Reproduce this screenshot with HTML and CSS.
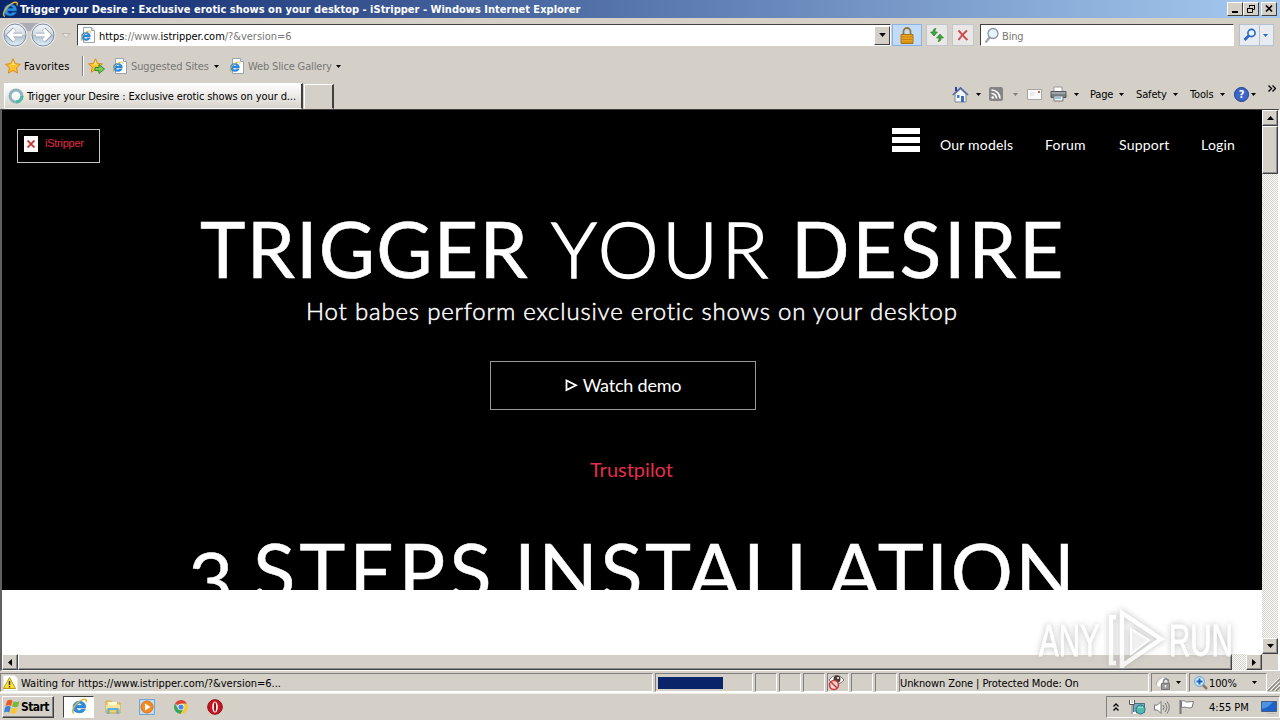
FILE: index.html
```
<!DOCTYPE html>
<html lang="en">
<head>
    <meta charset="UTF-8">
    <meta name="viewport" content="width=device-width, initial-scale=1.0">
    <title>Trigger your Desire - Windows Internet Explorer</title>
    <link rel="stylesheet" href="styles.css">
</head>
<body>
    <svg class="defs" width="0" height="0">
        <symbol id="ie" viewBox="0 0 16 16">
            <path d="M13.8 9.300H5.300c.3 3 3.500 3 4.500 1.200h3.700C11.800 15.600 2 15.300 2 8.400 2 1.200 14.600 1 13.800 9.300zM5.400 6.800h4.900c-.3-2.500-4.500-2.500-4.900 0z" fill="#2b8fe0" stroke="#1763b5" stroke-width=".5" fill-rule="evenodd"/>
            <path d="M2.600 14.600C-1 13 4 5 9.500 2.200 13 .4 15.500 1 14 4.300" fill="none" stroke="#e8b830" stroke-width="1.300"/>
            <path d="M3 13.600C1.500 11 6 5 10 2.600" fill="none" stroke="#3f9be8" stroke-width=".8"/>
        </symbol>
        <symbol id="iepage" viewBox="0 0 16 16">
            <path d="M3.500.5h8l3 3v12h-11z" fill="#fff" stroke="#9aa4b0"/>
            <path d="M11.500.5v3h3" fill="#dde5ee" stroke="#9aa4b0"/>
            <use href="#ie" x="0" y="3" width="12" height="12"/>
        </symbol>
        <symbol id="star" viewBox="0 0 16 16">
            <path d="M8 .8l2.200 4.900 5.200.6-3.900 3.500 1.100 5.300L8 12.400l-4.600 2.700 1.100-5.300L.6 6.300l5.200-.6z" fill="#ffc22e" stroke="#d68a17"/>
            <path d="M8 3l1.300 3.500 3 .5H4l2.700-.5z" fill="#ffe88a"/>
        </symbol>
        <symbol id="down" viewBox="0 0 5 3"><path d="M0 0h5L2.500 3z"/></symbol>
    </svg>

    <div class="titlebar">
        <svg class="title-icon"><use href="#ie"/></svg>
        <span class="title">Trigger your Desire : Exclusive erotic shows on your desktop - iStripper - Windows Internet Explorer</span>
        <div class="winbuttons">
            <span class="winbtn"><svg width="12" height="10"><path d="M3 8h6" stroke="#000" stroke-width="2"/></svg></span>
            <span class="winbtn"><svg width="12" height="10"><path d="M4.500 3.500V1.500h5v4h-2M4 1.500h6M2.500 4.500h5v4h-5zM2 4.500h6" fill="none" stroke="#000"/></svg></span>
            <span class="winbtn close"><svg width="12" height="10"><path d="M3 1.500l6 6M9 1.500l-6 6" stroke="#000" stroke-width="1.600"/></svg></span>
        </div>
    </div>

    <div class="navbar">
        <svg class="backfwd" width="56" height="28" viewBox="0 0 56 28">
            <defs>
                <linearGradient id="orb" x2="0" y2="1"><stop offset="0" stop-color="#f2f5f8"/><stop offset=".48" stop-color="#d5dce4"/><stop offset=".5" stop-color="#aebfce"/><stop offset="1" stop-color="#e4f1fa"/></linearGradient>
            </defs>
            <path d="M15 2h27v8H15z" fill="#a9abb5"/>
            <circle cx="15" cy="14" r="12.500" fill="#e9ebee"/><circle cx="43" cy="14" r="12.500" fill="#e9ebee"/>
            <circle cx="15" cy="14" r="11" fill="url(#orb)" stroke="#7d8c9e"/>
            <circle cx="43" cy="14" r="11" fill="url(#orb)" stroke="#7d8c9e"/>
            <path d="M22 14H9M14.500 8L8.500 14l6 6" fill="none" stroke="#8d9db0" stroke-width="4.400"/>
            <path d="M36 14h13M43.500 8l6 6-6 6" fill="none" stroke="#8d9db0" stroke-width="4.400"/>
            <path d="M22 14H9M14.500 8.500L9 14l5.500 5.500" fill="none" stroke="#fff" stroke-width="3.200"/>
            <path d="M36 14h13M43.500 8.500L49 14l-5.500 5.500" fill="none" stroke="#fff" stroke-width="3.200"/>
        </svg>
        <svg class="history" width="8" height="5"><path d="M0 .5h8L4 4.500z" fill="#e8e5df" stroke="#aaa69d" stroke-width=".7"/></svg>
        <div class="address">
            <svg width="16" height="16"><use href="#iepage"/></svg>
            <span class="url"><b>https</b>://www.<b>istripper.com</b>/?&amp;version=6</span>
            <span class="dropbtn"><svg width="7" height="4"><use href="#down"/></svg></span>
        </div>
        <div class="navbtn lock">
            <svg width="16" height="17" viewBox="0 0 16 17"><path d="M4.500 8V4.500a3.500 3.500 0 017 0V8" fill="none" stroke="#91773c" stroke-width="1.800"/><path d="M2 7.500h12v9H2z" fill="#eaa51f" stroke="#a8721a"/><path d="M2.500 10h11M2.500 12.500h11M2.500 15h11" stroke="#c58112"/></svg>
        </div>
        <div class="navbtn refresh">
            <svg width="16" height="16" viewBox="0 0 16 16"><path d="M7 1.500C4.500 1.500 4 3 4 5H1.500L5 9l3.500-4H6c0-1.500 0-2 1-3.500zM9 14.500c2.500 0 3-1.500 3-3.500h2.500L11 7l-3.500 4H10c0 1.500 0 2-1 3.500z" fill="#3ba63c" stroke="#247526" stroke-width=".6"/></svg>
        </div>
        <div class="navbtn stop">
            <svg width="12" height="12"><path d="M1.500 1.500C4 4 7 8 10.500 11M10 1.500C7 4 4 7 1.500 11" stroke="#cf4a51" stroke-width="2" fill="none"/></svg>
        </div>
        <div class="search">
            <svg width="16" height="17" viewBox="0 0 16 17"><path d="M1.500 15.500L6 10" stroke="#a0a6ad" stroke-width="2.200"/><circle cx="9" cy="6.500" r="5" fill="#e7f3fc" stroke="#8795a6" stroke-width="1.300"/></svg>
            <span>Bing</span>
        </div>
        <div class="go">
            <span class="mag"><svg width="14" height="14"><path d="M1.500 12L6 7.500" stroke="#2467c8" stroke-width="2.600"/><circle cx="8.500" cy="5" r="3.600" fill="#e6f2fd" stroke="#2467c8" stroke-width="1.600"/></svg></span>
            <span class="mag-more"><svg width="5" height="3" fill="#2467c8"><use href="#down"/></svg></span>
        </div>
    </div>

    <div class="favbar">
        <svg width="16" height="16"><use href="#star"/></svg>
        <span class="fav">Favorites</span>
        <span class="sep"></span>
        <svg width="17" height="16"><use href="#star" width="15" height="15"/><path d="M7 9.500h4v-3l5.500 4.500L11 15.500v-3H7z" fill="#7ccb57" stroke="#2f8b2c"/></svg>
        <svg class="sites-icon" width="16" height="16"><use href="#iepage"/></svg>
        <span class="link sites">Suggested Sites</span>
        <svg class="arr"><use href="#down"/></svg>
        <svg class="slice-icon" width="16" height="16"><use href="#iepage"/></svg>
        <span class="link slice">Web Slice Gallery</span>
        <svg class="arr"><use href="#down"/></svg>
    </div>

    <div class="tabbar">
        <div class="tab">
            <svg width="16" height="16"><circle cx="8" cy="8" r="6" fill="#f4f8f9" stroke="#8fb4bb" stroke-width="3"/><path d="M8 14a6 6 0 006-6" fill="none" stroke="#49bba5" stroke-width="3"/></svg>
            <span>Trigger your Desire : Exclusive erotic shows on your d...</span>
        </div>
        <div class="newtab"></div>
        <div class="commands">
            <svg class="cmd-icon" width="17" height="17" viewBox="0 0 17 17"><path d="M3 8v8h11V8L8.500 3z" fill="#f6f7fb" stroke="#7c8799"/><path d="M.8 9L8.500 1.800 16 9" fill="none" stroke="#566d9b" stroke-width="1.700"/><path d="M3 1h2v4H3z" fill="#3639a8"/><path d="M9 10h3v6H9z" fill="#3c6fb6"/><path d="M5 9h2.500v3H5z" fill="#4a7dc8"/></svg>
            <svg class="arr home-arr"><use href="#down"/></svg>
            <svg class="cmd-icon rss" width="14" height="14"><rect width="14" height="14" rx="2" fill="#858585"/><path d="M2.500 3a8.500 8.500 0 018.500 8.500M2.500 6.500a5 5 0 015 5" fill="none" stroke="#fff" stroke-width="1.700"/><circle cx="3.700" cy="10.500" r="1.300" fill="#fff"/></svg>
            <svg class="arr pale"><use href="#down"/></svg>
            <svg class="cmd-icon mail" width="15" height="11"><path d="M.5.5h14v10H.5z" fill="#fafafa" stroke="#a7a4a4"/><path d="M11 2h2v2h-2z" fill="#d15b60"/><path d="M3 4h5M3 6h4" stroke="#d8d8d8"/></svg>
            <svg class="cmd-icon print" width="17" height="16"><path d="M4 1h8v5H4z" fill="#fff" stroke="#999"/><path d="M1 5.500h15v6H1z" fill="#777d83" stroke="#54585d"/><path d="M1.500 7h14" stroke="#c9ced1"/><path d="M4 10h9v5H4z" fill="#e9f3fa" stroke="#777"/><path d="M5 12h6" stroke="#4d98d0"/></svg>
            <svg class="arr"><use href="#down"/></svg>
            <span class="page">Page</span><svg class="arr"><use href="#down"/></svg>
            <span class="safety">Safety</span><svg class="arr"><use href="#down"/></svg>
            <span class="tools">Tools</span><svg class="arr"><use href="#down"/></svg>
            <span class="help">?</span><svg class="arr"><use href="#down"/></svg>
            <svg class="chevrons" width="8" height="7"><path d="M.5.500l3 3-3 3M4.500.500l3 3-3 3" fill="none" stroke="#000" stroke-width="1.400"/></svg>
        </div>
    </div>

    <div class="viewport">
        <div class="web">
            <div class="site">
                <div class="site-header">
                    <div class="logo">
                        <span class="broken"><svg width="8" height="8"><path d="M.5.500l7 7M7.500.500l-7 7" stroke="#cb3035" stroke-width="1.800"/></svg></span>
                        <span class="alt">iStripper</span>
                    </div>
                    <div class="site-nav">
                        <div class="burger"><i></i><i></i><i></i></div>
                        <span class="models">Our models</span>
                        <span class="forum">Forum</span>
                        <span class="support">Support</span>
                        <span class="login">Login</span>
                    </div>
                </div>
                <h1 class="hero"><span class="trigger">TRIGGER</span><span class="your">YOUR</span><span class="desire">DESIRE</span></h1>
                <p class="tagline">Hot babes perform exclusive erotic shows on your desktop</p>
                <div class="demo">
                    <svg width="13" height="13"><path d="M1.500 1.500v9.500l9.500-4.700z" fill="none" stroke="#fff" stroke-width="1.800"/></svg>
                    <span>Watch demo</span>
                </div>
                <div class="trustpilot">Trustpilot</div>
                <h2 class="steps"><span class="three">3</span><span class="word-steps">STEPS</span><span class="install">INSTALLATION</span></h2>
            </div>
        </div>
        <div class="vscroll">
            <span class="sbtn"><svg width="7" height="4"><path d="M0 4h7L3.500 0z"/></svg></span>
            <span class="vthumb"></span>
            <span class="sbtn last"><svg width="7" height="4"><path d="M0 0h7L3.500 4z"/></svg></span>
        </div>
        <div class="hscroll">
            <span class="sbtn"><svg width="4" height="7"><path d="M4 0v7L0 3.500z"/></svg></span>
            <span class="hthumb"></span>
            <span class="sbtn last"><svg width="4" height="7"><path d="M0 0v7l4-3.500z"/></svg></span>
        </div>
        <div class="corner"></div>
        <div class="watermark">
            <span class="any">ANY</span>
            <svg width="58" height="64" viewBox="0 0 58 64"><path d="M8 8H3v46h5M14 59V4l39 26L15 56" fill="none" stroke="#fff" stroke-width="4.500"/><path d="M23 20v25l18-14z" fill="#ececec" stroke="#fff" stroke-width="2"/></svg>
            <span class="run">RUN</span>
        </div>
    </div>

    <div class="statusbar">
        <div class="pane waiting">
            <svg width="17" height="16"><path d="M2.500.500h11l3 3v12h-14z" fill="#fff"/><path d="M8.500 2.500l6 11h-12z" fill="#ffe03b" stroke="#b89b12" stroke-linejoin="round"/><path d="M8.500 6v4M8.500 11v1.500" stroke="#333" stroke-width="1.500"/></svg>
            <span>Waiting for https://www.istripper.com/?&amp;version=6...</span>
        </div>
        <div class="pane progress"><span class="bar"></span></div>
        <div class="pane small"></div>
        <div class="pane small"></div>
        <div class="pane small"></div>
        <div class="pane small">
            <svg width="18" height="17"><path d="M1 6c4-6 11-6 15 0-4 5-11 5-15 0z" fill="#fff" stroke="#77706b"/><circle cx="9" cy="5" r="3.500" fill="#4b3932"/><circle cx="10" cy="4" r="1" fill="#fff"/><circle cx="6" cy="11" r="4.500" fill="#f2d9d8" stroke="#c93f42" stroke-width="1.600"/><path d="M3 8l6 6" stroke="#c93f42" stroke-width="1.600"/></svg>
        </div>
        <div class="pane small"></div>
        <div class="pane small"></div>
        <div class="pane zone"><span>Unknown Zone | Protected Mode: On</span></div>
        <div class="pane privacy">
            <svg width="18" height="16"><path d="M2 10C3 2 12 0 14 6" fill="#eee" stroke="#aaa"/><path d="M4 11l6-8" stroke="#fff" stroke-width="3"/><path d="M9.500 9V6.500a2.500 2.500 0 015 0V9" fill="none" stroke="#888" stroke-width="1.500"/><path d="M7.500 8.500h8v6h-8z" fill="#999" stroke="#777"/><path d="M11.500 10v2.500" stroke="#eee" stroke-width="1.500"/></svg>
            <svg class="arr"><use href="#down"/></svg>
        </div>
        <div class="pane zoom">
            <svg width="14" height="14"><path d="M8 8l5 5" stroke="#8b785e" stroke-width="2.500"/><circle cx="5.500" cy="5.500" r="4.800" fill="#d7edfd" stroke="#4f9cd7"/><path d="M5.500 2.500v6M2.500 5.500h6" stroke="#1e61bd" stroke-width="2"/></svg>
            <span>100%</span>
            <svg class="arr"><use href="#down"/></svg>
        </div>
        <svg class="grip" width="13" height="13"><path d="M1 13L13 1M5 13l8-8M9 13l4-4" stroke="#8c887f" stroke-width="1.500"/><path d="M0 12L12 0M4 12l8-8M8 12l5-5" stroke="#fff"/></svg>
    </div>

    <div class="taskbar">
        <div class="start">
            <svg width="17" height="16" viewBox="0 0 17 16"><path d="M3 2c2-1.500 4-1.500 5.500-.3L7 7C5.500 6 3.500 6 1.500 7z" fill="#e85c28"/><path d="M9.500 2.200c2 1 4 1 6 0L14 7.500c-2 1-4 1-6 0z" fill="#7cb73e"/><path d="M1.200 8c2-1.200 4-1.200 5.600 0L5.300 13.500c-1.600-1-3.600-1-5.300 0z" fill="#3d83d4"/><path d="M7.700 8.700c2 1 4 1 6 0L12.200 14c-2 1-4 1-6 0z" fill="#f8c62f"/></svg>
            <span>Start</span>
        </div>
        <div class="task-ie"><svg width="17" height="17"><use href="#ie"/></svg></div>
        <svg class="folder" width="16" height="16"><path d="M1 2h5l1.500 2H15v10H1z" fill="#efd36d" stroke="#c9a747"/><path d="M3 3h9v3H3z" fill="#fff7ce"/><path d="M1 6h14v4H1z" fill="#f7e59a"/><path d="M3.500 15v-5h9v5" fill="none" stroke="#5eafe1" stroke-width="2.200"/></svg>
        <svg class="media" width="16" height="16"><path d="M.5.500h15v15H.5z" fill="#c2dcf3" stroke="#6ea5d6"/><circle cx="8" cy="8" r="6" fill="#f58a20" stroke="#d8731b"/><path d="M6 4.500v7L11.500 8z" fill="#fff"/></svg>
        <svg class="chrome" width="14" height="14" viewBox="0 0 14 14"><path d="M7 7L1 3.500A7 7 0 0113.100 3.700H7z" fill="#dc4437"/><path d="M7 7v0L4 8.700 1 3.500A7 7 0 006.500 14l3.200-5.300z" fill="#3ba35a"/><path d="M7 3.700h6.100A7 7 0 016.500 14L10 8.700z" fill="#f6c935"/><circle cx="7" cy="7" r="3.300" fill="#fff"/><circle cx="7" cy="7" r="2.600" fill="#4687e8"/></svg>
        <svg class="opera" width="16" height="16"><circle cx="8" cy="8" r="7.300" fill="#c91420" stroke="#8f0c14"/><ellipse cx="8" cy="8" rx="2.800" ry="5.500" fill="#fff"/><ellipse cx="8" cy="8" rx="1.100" ry="4.800" fill="#8e1118"/></svg>
        <div class="tray">
            <svg class="up" width="6" height="8"><path d="M.5 3.500L3 1l2.500 2.500M.5 7.500L3 5l2.500 2.500" fill="none" stroke="#000" stroke-width="1.300"/></svg>
            <svg class="net" width="17" height="16"><path d="M4.500 4.500h11v9h-11z" fill="#77a9ba" stroke="#44747d"/><path d="M1 1v4h4V1M3 5v9h4" fill="none" stroke="#fff" stroke-width="2"/><path d="M.5 1v4.500h5V1M3 6v9" fill="none" stroke="#555"/><circle cx="11.500" cy="10.500" r="4.500" fill="#53b7ad" stroke="#28768d"/><path d="M9 9c2-2 3 1 5-1" stroke="#bee9dd" fill="none"/></svg>
            <svg class="sound" width="17" height="15"><path d="M1.500 5h3L8 1.500v12L4.500 10h-3z" fill="#fff" stroke="#777"/><path d="M10 5q2 2.500 0 5M12 3q3.500 4.500 0 9M14 1.500q4.500 6 0 12" fill="none" stroke="#777"/></svg>
            <svg class="flag" width="17" height="16"><path d="M2.500 1v14" stroke="#777" stroke-width="2"/><path d="M3.500 2.500c3-2 4 1 6 .5 2 0 3-.5 6-.5L14 8.500c-4 1-5-1-10.500 0z" fill="#fff" stroke="#777"/></svg>
            <span class="clock">4:55 PM</span>
            <svg class="desk" width="16" height="13"><path d="M.5.500h15v10H.5z" fill="#1c62c7" stroke="#405c87"/><path d="M1 8Q8 6 12 1H1z" fill="#4c94e2"/><path d="M6 12.500h9" stroke="#bbb"/></svg>
        </div>
    </div>
</body>
</html>
```
FILE: styles.css
```
* {
    box-sizing: border-box;
}
body {
    margin: 0;
    width: 1280px;
    height: 720px;
    overflow: hidden;
    display: flex;
    flex-direction: column;
    background-color: #d4d0c8;
    color: #000;
    font-family: "DejaVu Sans Condensed", "DejaVu Sans", sans-serif;
    font-stretch: condensed;
    font-size: 11px;
    letter-spacing: -0.15px;
    white-space: nowrap;
}
svg {
    display: block;
    flex: none;
}
.defs {
    position: absolute;
}
.arr {
    width: 5px;
    height: 3px;
}

/* title bar */
.titlebar {
    height: 18px;
    flex: none;
    display: flex;
    align-items: center;
    padding: 0 3px 0 2px;
    background: linear-gradient(to right, #0a246a, #a6caf0);
    color: #fff;
}
.title-icon {
    width: 17px;
    height: 17px;
}
.title {
    margin-left: 1px;
    font-weight: bold;
    letter-spacing: 0.01px;
}
.winbuttons {
    margin-left: auto;
    display: flex;
}
.winbtn {
    width: 16px;
    height: 14px;
    padding: 1px;
    background-color: #d4d0c8;
    border: 1px solid;
    border-color: #fff #404040 #404040 #fff;
}
.close {
    margin-left: 2px;
}

/* back / forward / address */
.navbar {
    height: 34px;
    flex: none;
    display: flex;
    align-items: center;
}
.history {
    margin: 0 7px 0 6px;
}
.address {
    width: 814px;
    height: 22px;
    display: flex;
    align-items: center;
    padding-left: 2px;
    background-color: #fff;
    border: 1px solid;
    border-color: #404040 #fff #fff #404040;
}
.url {
    margin: 2px 0 0 3px;
    color: #777;
    letter-spacing: -0.03px;
}
.url b {
    font-weight: normal;
    color: #000;
}
.dropbtn {
    margin-left: auto;
    width: 16px;
    height: 19px;
    display: flex;
    align-items: center;
    justify-content: center;
    background-color: #d4d0c8;
    border: 1px solid;
    border-color: #fff #404040 #404040 #fff;
}
.navbtn {
    height: 22px;
    display: flex;
    align-items: center;
    justify-content: center;
    background-color: #e9e8e6;
    border: 1px solid #bfc6cd;
}
.lock {
    width: 30px;
    margin-left: 1px;
    background-color: #c4dbf8;
    border-color: #86b3ea;
}
.refresh {
    width: 22px;
    margin-left: 4px;
}
.stop {
    width: 22px;
    margin-left: 4px;
}
.search {
    width: 254px;
    height: 22px;
    margin-left: 6px;
    padding-left: 3px;
    display: flex;
    align-items: center;
    background-color: #fff;
    border: 1px solid;
    border-color: #404040 #fff #fff #404040;
    color: #777;
}
.search span {
    margin: 2px 0 0 2px;
}
.go {
    height: 22px;
    margin-left: 5px;
    display: flex;
    border: 1px solid #b4c1d2;
    background-color: #e8ebf0;
}
.mag {
    width: 20px;
    padding: 3px;
    border-right: 1px solid #b4c1d2;
}
.mag-more {
    width: 13px;
    padding: 9px 3px;
}

/* favourites */
.favbar {
    height: 28px;
    flex: none;
    display: flex;
    align-items: center;
    padding-left: 5px;
}
.fav {
    width: 54px;
    margin-left: 3px;
    letter-spacing: 0.1px;
}
.sep {
    width: 2px;
    height: 20px;
    margin: 0 4px 0 4px;
    border-left: 1px solid #808080;
    border-right: 1px solid #fff;
}
.link {
    color: #777;
}
.sites-icon {
    margin-left: 7px;
}
.sites {
    width: 80px;
    margin: 0 3px 0 3px;
}
.slice-icon {
    margin-left: 10px;
}
.slice {
    width: 85px;
    margin: 0 3px 0 3px;
}

/* tabs and command bar */
.tabbar {
    height: 29px;
    flex: none;
    display: flex;
    align-items: flex-end;
}
.tab {
    width: 299px;
    height: 26px;
    margin-left: 4px;
    padding-left: 3px;
    display: flex;
    align-items: center;
    background: linear-gradient(#fff, #d8d4cd);
    border: 1px solid;
    border-color: #fff #404040 transparent #fff;
    border-right-width: 2px;
}
.tab span {
    margin-left: 3px;
    letter-spacing: -0.1px;
}
.newtab {
    width: 30px;
    height: 25px;
    margin-left: 1px;
    border: 1px solid;
    border-color: #fff #404040 transparent #fff;
    border-right-width: 2px;
}
.commands {
    height: 30px;
    margin-left: auto;
    padding-right: 4px;
    display: flex;
    align-items: center;
}
.home-arr {
    margin-left: 7px;
}
.rss {
    margin-left: 8px;
}
.pale {
    margin-left: 10px;
    opacity: .4;
}
.mail {
    margin-left: 9px;
}
.print {
    margin: 0 7px 0 8px;
}
.page {
    width: 26px;
    margin: 0 3px 0 11px;
}
.safety {
    width: 33px;
    margin: 0 4px 0 12px;
}
.tools {
    width: 27px;
    margin: 0 3px 0 12px;
}
.help {
    width: 15px;
    height: 15px;
    margin: 0 2px 0 9px;
    border-radius: 50%;
    border: 1px solid #1c3c8c;
    background-color: #3d66c6;
    color: #fff;
    font-weight: bold;
    line-height: 13px;
    text-align: center;
}
.chevrons {
    margin: 0 0 12px 12px;
}

/* browser viewport */
.viewport {
    position: relative;
    height: 562px;
    flex: none;
    display: grid;
    grid-template-columns: 1260px 16px;
    grid-template-rows: 544px 16px;
    border: 1px solid #404040;
    border-left: 2px solid #606060;
    border-right: 2px solid #fff;
    border-bottom: 1px solid #fff;
}
.web {
    background-color: #fff;
    overflow: hidden;
}
.site {
    height: 480px;
    overflow: hidden;
    background-color: #000;
    color: #fff;
    font-family: Lato, sans-serif;
    font-stretch: normal;
    letter-spacing: 0;
}
.site-header {
    height: 98px;
    display: flex;
    justify-content: space-between;
}
.logo {
    width: 83px;
    height: 34px;
    margin: 19px 0 0 15px;
    padding: 6px;
    display: flex;
    border: 1px solid #c8c8c8;
}
.broken {
    width: 14px;
    height: 16px;
    padding: 4px 3px;
    background-color: #fff;
}
.alt {
    margin-left: 7px;
    font-family: "Liberation Sans", Arial, sans-serif;
    font-size: 11px;
    line-height: 15px;
    letter-spacing: -0.25px;
    color: #e02b45;
}
.site-nav {
    display: flex;
    font-size: 14px;
    line-height: 17px;
    letter-spacing: 0.2px;
    padding-top: 26px;
}
.burger {
    width: 28px;
    height: 24px;
    margin: -8px 20px 0 0;
    display: flex;
    flex-direction: column;
    justify-content: space-between;
}
.burger i {
    height: 6px;
    background-color: #fff;
}
.models {
    width: 105px;
}
.forum {
    width: 74px;
}
.support {
    width: 82px;
}
.login {
    width: 61px;
}
.hero, .steps {
    margin: 0;
    display: flex;
    font-size: 78px;
    font-weight: normal;
    line-height: 80px;
}
.hero {
    font-size: 77px;
}
.trigger {
    width: 351px;
    margin-left: 198px;
    letter-spacing: 1.2px;
    -webkit-text-stroke: 0.6px #fff;
}
.your {
    width: 240px;
    font-weight: 300;
    letter-spacing: 3.4px;
    -webkit-text-stroke: 1.5px #fff;
}
.desire {
    letter-spacing: 2.7px;
    -webkit-text-stroke: 0.6px #fff;
}
.tagline {
    margin: 8px 0 0 304px;
    font-size: 24px;
    font-weight: 300;
    line-height: 30px;
    letter-spacing: 0.82px;
    -webkit-text-stroke: 0.5px #fff;
}
.demo {
    width: 266px;
    height: 49px;
    margin: 35px 0 0 488px;
    display: flex;
    align-items: center;
    justify-content: center;
    gap: 5px;
    border: 1px solid #999;
    font-size: 18px;
    letter-spacing: -0.2px;
}
.demo span {
    padding-bottom: 2px;
}
.trustpilot {
    margin: 47px 0 0 588px;
    font-size: 20px;
    line-height: 24px;
    color: #e52e4d;
}
.steps {
    margin-top: 49px;
    -webkit-text-stroke: 0.5px #fff;
}
.three {
    width: 64px;
    margin-left: 186px;
    padding-top: 9px;
}
.word-steps {
    width: 264px;
    margin-left: 1px;
    letter-spacing: 4px;
}
.install {
    margin-left: -3px;
    letter-spacing: 2.4px;
}

/* scrollbars */
.vscroll, .hscroll {
    display: flex;
    background: repeating-conic-gradient(#fff 0 25%, #d4d0c8 0 50%) 0 0 / 2px 2px;
}
.vscroll {
    flex-direction: column;
}
.sbtn, .vthumb, .hthumb {
    background-color: #d4d0c8;
    border: 1px solid;
    border-color: #fff #404040 #404040 #fff;
    box-shadow: inset -1px -1px #909090;
}
.sbtn {
    width: 16px;
    height: 16px;
    flex: none;
    display: flex;
    align-items: center;
    justify-content: center;
}
.vthumb {
    height: 48px;
}
.hthumb {
    width: 1214px;
}
.vscroll .last {
    margin-top: auto;
}
.hscroll .last {
    margin-left: auto;
}
.corner {
    background-color: #d4d0c8;
}
.watermark {
    position: absolute;
    left: 1037px;
    top: 499px;
    display: flex;
    align-items: center;
    color: #fff;
    font-family: "Liberation Sans", Arial, sans-serif;
    font-size: 44px;
    letter-spacing: 0;
    -webkit-text-stroke: 0.8px #fff;
    filter: drop-shadow(0 0 3px #aaa);
    opacity: .8;
}
.watermark span {
    width: 64px;
}
.watermark svg {
    margin: 0 3px 0 5px;
}
.any, .run {
    transform: scaleX(.67);
    transform-origin: left;
}

/* status bar */
.statusbar {
    height: 22px;
    flex: none;
    display: flex;
    gap: 2px;
    padding: 2px 0 1px 0;
    border-bottom: 1px solid #fff;
}
.pane {
    height: 19px;
    flex: none;
    display: flex;
    align-items: center;
    border: 1px solid;
    border-color: #808080 #fff #fff #808080;
}
.pane span {
    padding-top: 1px;
}
.waiting {
    width: 653px;
}
.waiting span {
    margin-left: 3px;
    letter-spacing: 0;
}
.progress {
    width: 98px;
    padding-left: 2px;
}
.bar {
    width: 65px;
    height: 12px;
    background-color: #0a246a;
}
.small {
    width: 22px;
}
.zone {
    width: 250px;
    letter-spacing: -0.1px;
}
.privacy {
    width: 36px;
    padding-left: 2px;
}
.privacy .arr {
    margin-left: 4px;
}
.zoom {
    width: 78px;
    padding-left: 4px;
}
.zoom span {
    width: 42px;
    margin-left: 1px;
}
.zoom .arr {
    margin-left: 1px;
}
.grip {
    margin: 5px 0 0 -2px;
}

/* taskbar */
.taskbar {
    flex: 1;
    display: flex;
    align-items: center;
    padding-left: 2px;
    border-top: 1px solid #eeece8;
}
.start {
    width: 52px;
    height: 22px;
    padding-left: 1px;
    display: flex;
    align-items: center;
    border: 1px solid;
    border-color: #fff #404040 #404040 #fff;
    box-shadow: inset -1px -1px #808080;
    font-size: 12px;
    font-weight: bold;
    letter-spacing: -0.6px;
}
.task-ie {
    width: 31px;
    height: 22px;
    margin-left: 9px;
    padding: 1px 7px;
    background-color: #fff;
    border: 1px solid;
    border-color: #404040 #fff #fff #404040;
}
.folder {
    margin-left: 11px;
}
.media {
    margin-left: 18px;
}
.chrome {
    margin-left: 19px;
}
.opera {
    margin-left: 19px;
}
.tray {
    width: 174px;
    height: 22px;
    margin-left: auto;
    padding-left: 6px;
    display: flex;
    align-items: center;
    border: 1px solid;
    border-color: #808080 #fff #fff #808080;
}
.net {
    margin-left: 10px;
}
.sound {
    margin-left: 7px;
}
.flag {
    margin-left: 8px;
}
.clock {
    width: 44px;
    margin-left: 14px;
    letter-spacing: 0;
}
.desk {
    margin-left: 8px;
}
```
